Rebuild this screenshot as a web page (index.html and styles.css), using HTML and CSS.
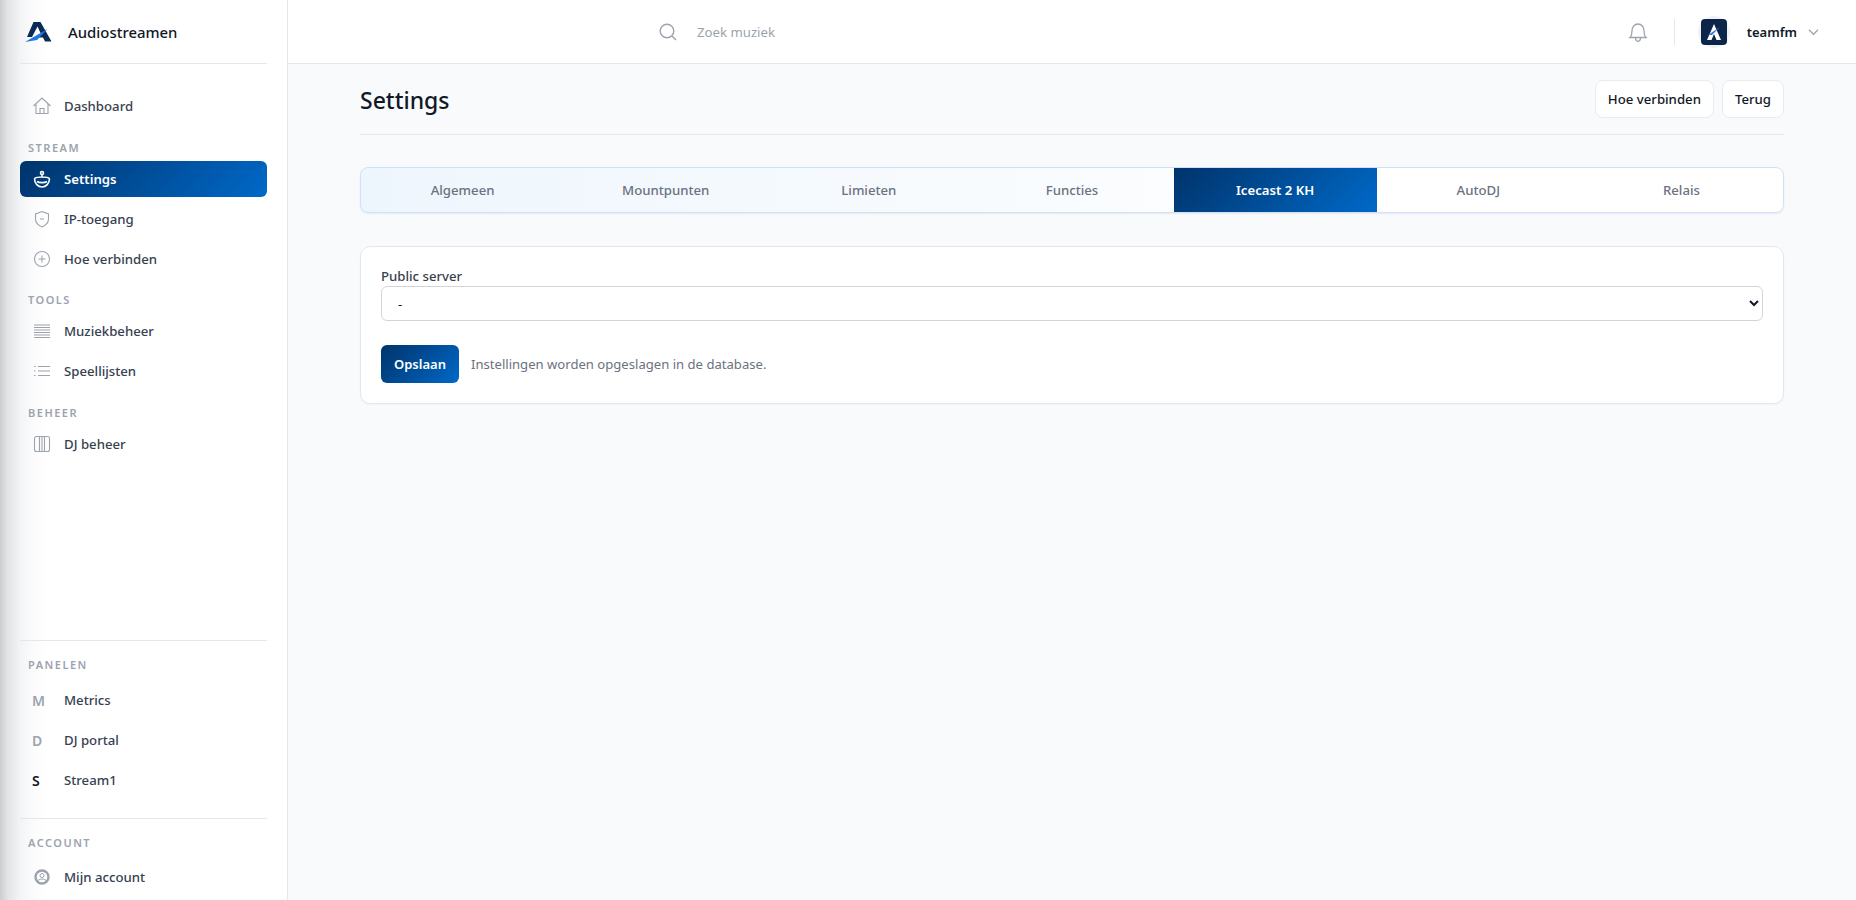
FILE: index.html
```html
<!DOCTYPE html>
<html lang="en">
<head>
    <meta charset="UTF-8">
    <meta name="viewport" content="width=device-width, initial-scale=1.0">
    <title>Settings</title>
    <link rel="stylesheet" href="styles.css">
</head>
<body>
    <aside class="sidebar">
        <div class="brand">
            <svg class="brand-logo" viewBox="24 21 28 22" width="28" height="22">
                <path d="M33.500 22h7l11 19.500h-6.500l-2-4h-6l3-3.500h1l-3.500-7.500-5.500 10.500h-5z" fill="#0b2a55"/>
                <path d="M25 42 47.500 29 37 40z" fill="#1a7ae0"/>
            </svg>
            <span class="brand-name">Audiostreamen</span>
        </div>

        <nav class="nav nav-top">
            <a class="nav-item">
                <svg class="nav-icon" viewBox="0 0 20 20"><path d="M1.500 10 10 2l8.500 8M4 8v9.500h12V8M8 17.500v-5h4v5"/></svg>
                Dashboard
            </a>
            <div class="nav-label">STREAM</div>
            <a class="nav-item active">
                <svg class="nav-icon" viewBox="0 0 20 20"><circle cx="10" cy="4" r="1.500"/><path d="M10 5.500V8M2.500 9.500c0 5 3.500 8.500 7.500 8.500s7.500-3.500 7.500-8.500M2.500 9.500C4 8.200 6.500 8 10 8s6 .2 7.500 1.500M5 12.500c2 1.500 8 1.500 10 0"/></svg>
                Settings
            </a>
            <a class="nav-item">
                <svg class="nav-icon" viewBox="0 0 20 20"><path d="M10 2.500 16.500 5v5c0 4-3 6.500-6.500 8-3.500-1.500-6.500-4-6.500-8V5zM8 10h4"/></svg>
                IP-toegang
            </a>
            <a class="nav-item">
                <svg class="nav-icon" viewBox="0 0 20 20"><circle cx="10" cy="10" r="7.500"/><path d="M10 6.500v7M6.500 10h7"/></svg>
                Hoe verbinden
            </a>
            <div class="nav-label">TOOLS</div>
            <a class="nav-item">
                <svg class="nav-icon" viewBox="0 0 20 20"><path d="M2 4h16M2 6.500h16M2 9h16M2 11.500h16M2 14h16M2 16.500h16"/></svg>
                Muziekbeheer
            </a>
            <a class="nav-item">
                <svg class="nav-icon" viewBox="0 0 20 20"><path d="M6 5.500h12M6 10h12M6 14.500h12M2 5.500h1.500M2 10h1.500M2 14.500h1.500"/></svg>
                Speellijsten
            </a>
            <div class="nav-label">BEHEER</div>
            <a class="nav-item">
                <svg class="nav-icon" viewBox="0 0 20 20"><rect x="2.500" y="2.500" width="15" height="15" rx="2"/><path d="M7.500 2.500v15M10 2.500v15M12.500 2.500v15"/></svg>
                DJ beheer
            </a>
        </nav>

        <div class="sidebar-bottom">
            <div class="nav-section">
                <div class="nav-label">PANELEN</div>
                <a class="nav-item"><span class="nav-letter">M</span>Metrics</a>
                <a class="nav-item"><span class="nav-letter">D</span>DJ portal</a>
                <a class="nav-item"><span class="nav-letter dark">S</span>Stream1</a>
            </div>
            <div class="nav-section nav-account">
                <div class="nav-label">ACCOUNT</div>
                <a class="nav-item">
                    <svg class="nav-icon icon-account" viewBox="0 0 20 20"><circle cx="10" cy="10" r="6.500"/><circle class="icon-thin" cx="10" cy="8.500" r="2"/><path class="icon-thin" d="M6 13.500c2-2 6-2 8 0"/></svg>
                    Mijn account
                </a>
            </div>
        </div>
    </aside>

    <div class="main">
        <header class="topbar">
            <div class="search">
                <svg class="search-icon" viewBox="0 0 20 20"><circle cx="9" cy="9" r="6.800"/><path d="m14 14 4 4"/></svg>
                <span>Zoek muziek</span>
            </div>
            <div class="topbar-right">
                <svg class="bell" viewBox="0 0 20 22"><path d="M2 16.500c1.500-1.500 2-3 2-6.500 0-4 2.500-7 6-7s6 3 6 7c0 3.500.5 5 2 6.500zM7.500 16.500c0 5 5 5 5 0"/></svg>
                <span class="topbar-sep"></span>
                <div class="avatar">
                    <svg viewBox="0 0 26 26" width="26" height="26">
                        <rect width="26" height="26" rx="4" fill="#0c2548"/>
                        <path d="M13 5l7 16h-4.500L13 15l-2.500 6H6z" fill="#fff"/>
                        <path d="M7 16 19 8 11 16z" fill="#2f7de0"/>
                    </svg>
                </div>
                <span class="user-name">teamfm</span>
                <svg class="user-caret" viewBox="0 0 12 8"><path d="m1 1.500 5 5 5-5"/></svg>
            </div>
        </header>

        <main class="content">
            <div class="page-head">
                <h1>Settings</h1>
                <div class="page-actions">
                    <button class="btn-light">Hoe verbinden</button>
                    <button class="btn-light">Terug</button>
                </div>
            </div>

            <div class="tabs">
                <a class="tab">Algemeen</a>
                <a class="tab">Mountpunten</a>
                <a class="tab">Limieten</a>
                <a class="tab">Functies</a>
                <a class="tab active">Icecast 2 KH</a>
                <a class="tab">AutoDJ</a>
                <a class="tab">Relais</a>
            </div>

            <form class="card">
                <label class="field-label" for="server">Public server</label>
                <select id="server" class="field-select">
                    <option>-</option>
                </select>
                <div class="form-actions">
                    <button type="button" class="btn-primary">Opslaan</button>
                    <span class="form-note">Instellingen worden opgeslagen in de database.</span>
                </div>
            </form>
        </main>
    </div>
</body>
</html>
```

FILE: styles.css
```css
/* General */
* {
    box-sizing: border-box;
}

html, body {
    height: 100%;
}

body {
    margin: 0;
    display: flex;
    height: 100vh;
    overflow: hidden;
    font-family: "Noto Sans", sans-serif;
    font-size: 13.2px;
    color: #111827;
    background-color: #f9fafc;
}

/* Sidebar */
.sidebar {
    width: 288px;
    flex-shrink: 0;
    display: flex;
    flex-direction: column;
    padding: 0 20px 1px;
    border-right: 1px solid #e5e7eb;
    background: linear-gradient(90deg, #cbcdcf 0, #e3e4e6 8px, #f3f4f5 20px, #fbfbfb 32px, #ffffff 46px);
}

.brand {
    height: 64px;
    flex-shrink: 0;
    display: flex;
    align-items: center;
    gap: 16px;
    padding-left: 4px;
    border-bottom: 1px solid #e5e7eb;
}

.brand-name {
    font-size: 14.9px;
    font-weight: 500;
    color: #111827;
}

.nav {
    display: flex;
    flex-direction: column;
}

.nav-top {
    padding-top: 24px;
}

.nav-item {
    height: 36px;
    margin-bottom: 4px;
    padding-left: 12px;
    display: flex;
    align-items: center;
    gap: 12px;
    border-radius: 6px;
    font-size: 13.2px;
    font-weight: 500;
    color: #374151;
}

.nav-item.active {
    color: #ffffff;
    font-weight: 600;
    background: linear-gradient(135deg, #00336a, #0069c8);
}

.nav-icon {
    width: 20px;
    height: 20px;
    flex-shrink: 0;
    fill: none;
    stroke: #9ca3af;
    stroke-width: 1.1;
}

.nav-item.active .nav-icon {
    stroke: #ffffff;
    stroke-width: 1.6;
}

.icon-account {
    stroke-width: 2.4;
}

.icon-account .icon-thin {
    stroke-width: 1;
}

.nav-letter {
    width: 20px;
    font-size: 14px;
    font-weight: 600;
    color: #9ca3af;
}

.nav-letter.dark {
    color: #111827;
}

.nav-label {
    height: 18px;
    margin: 10.6px 0 4px;
    padding-left: 8px;
    line-height: 18px;
    font-size: 11px;
    font-weight: 600;
    letter-spacing: 1.5px;
    color: #9ca3af;
}

.sidebar-bottom {
    margin-top: auto;
}

.nav-section {
    padding-top: 15px;
    border-top: 1px solid #e5e7eb;
}

.nav-section .nav-label {
    margin: 0 0 8px;
}

.nav-account {
    margin-top: 20px;
}

.nav-account .nav-label {
    margin-bottom: 7px;
}

/* Main */
.main {
    flex: 1;
    min-width: 0;
    display: flex;
    flex-direction: column;
}

.topbar {
    height: 64px;
    flex-shrink: 0;
    display: flex;
    align-items: center;
    justify-content: space-between;
    padding: 0 37px 0 370px;
    background-color: #ffffff;
    border-bottom: 1px solid #e5e7eb;
}

.search {
    display: flex;
    align-items: center;
    gap: 19px;
    font-size: 13.2px;
    color: #9ca3af;
}

.search-icon {
    width: 20px;
    height: 20px;
    fill: none;
    stroke: #9ca3af;
    stroke-width: 1.4;
}

.topbar-right {
    display: flex;
    align-items: center;
}

.bell {
    width: 20px;
    height: 22px;
    fill: none;
    stroke: #9ca3af;
    stroke-width: 1.3;
}

.topbar-sep {
    width: 1px;
    height: 26px;
    margin: 0 23px 0 26px;
    background-color: #e5e7eb;
}

.avatar {
    width: 32px;
    height: 32px;
    display: flex;
    align-items: center;
    justify-content: center;
    border-radius: 50%;
    background-color: #f1f2f4;
}

.user-name {
    margin: 0 11px 0 17px;
    font-size: 13px;
    font-weight: 600;
    color: #111827;
}

.user-caret {
    width: 11px;
    height: 8px;
    fill: none;
    stroke: #9ca3af;
    stroke-width: 1.3;
}

/* Content */
.content {
    padding: 0 72px;
}

.page-head {
    height: 71px;
    display: flex;
    align-items: center;
    justify-content: space-between;
    border-bottom: 1px solid #e5e7eb;
}

.page-head h1 {
    margin: 2px 0 0;
    font-size: 23px;
    font-weight: 500;
    color: #111827;
}

.page-actions {
    display: flex;
    gap: 8px;
    margin-top: -1px;
}

.btn-light {
    height: 38px;
    padding: 0 12px;
    font-family: inherit;
    font-size: 13.2px;
    font-weight: 500;
    color: #111827;
    background-color: #ffffff;
    border: 1px solid #e9ebef;
    border-radius: 8px;
}

/* Tabs */
.tabs {
    height: 46px;
    margin-top: 32px;
    display: grid;
    grid-template-columns: repeat(7, 1fr);
    overflow: hidden;
    border: 1px solid #cfe2f5;
    border-radius: 8px;
    background: linear-gradient(90deg, #eef6fd, #ffffff 75%);
    box-shadow: 0 1px 2px rgba(0, 60, 130, 0.08);
}

.tab {
    display: flex;
    align-items: center;
    justify-content: center;
    font-size: 13.2px;
    font-weight: 500;
    color: #6b7280;
}

.tab.active {
    color: #ffffff;
    font-weight: 600;
    background: linear-gradient(135deg, #00336a, #0069c8);
}

/* Card */
.card {
    margin-top: 33px;
    height: 158px;
    padding: 19px 20px 0;
    background-color: #ffffff;
    border: 1px solid #e5e7eb;
    border-radius: 10px;
    box-shadow: 0 1px 2px rgba(0, 0, 0, 0.03);
}

.field-label {
    display: block;
    height: 20px;
    line-height: 20px;
    font-size: 13.2px;
    font-weight: 500;
    color: #374151;
}

.field-select {
    display: block;
    width: 100%;
    height: 35px;
    padding: 0 12px;
    font-family: inherit;
    font-size: 13px;
    color: #111827;
    background-color: #ffffff;
    border: 1px solid #d1d5db;
    border-radius: 6px;
}

.form-actions {
    margin-top: 24px;
    display: flex;
    align-items: center;
    gap: 12px;
}

.btn-primary {
    height: 38px;
    padding: 0 13px;
    font-family: inherit;
    font-size: 13px;
    font-weight: 600;
    color: #ffffff;
    border: none;
    border-radius: 6px;
    background: linear-gradient(135deg, #00336a, #0069c8);
}

.form-note {
    font-size: 13.1px;
    color: #6b7280;
}
```
